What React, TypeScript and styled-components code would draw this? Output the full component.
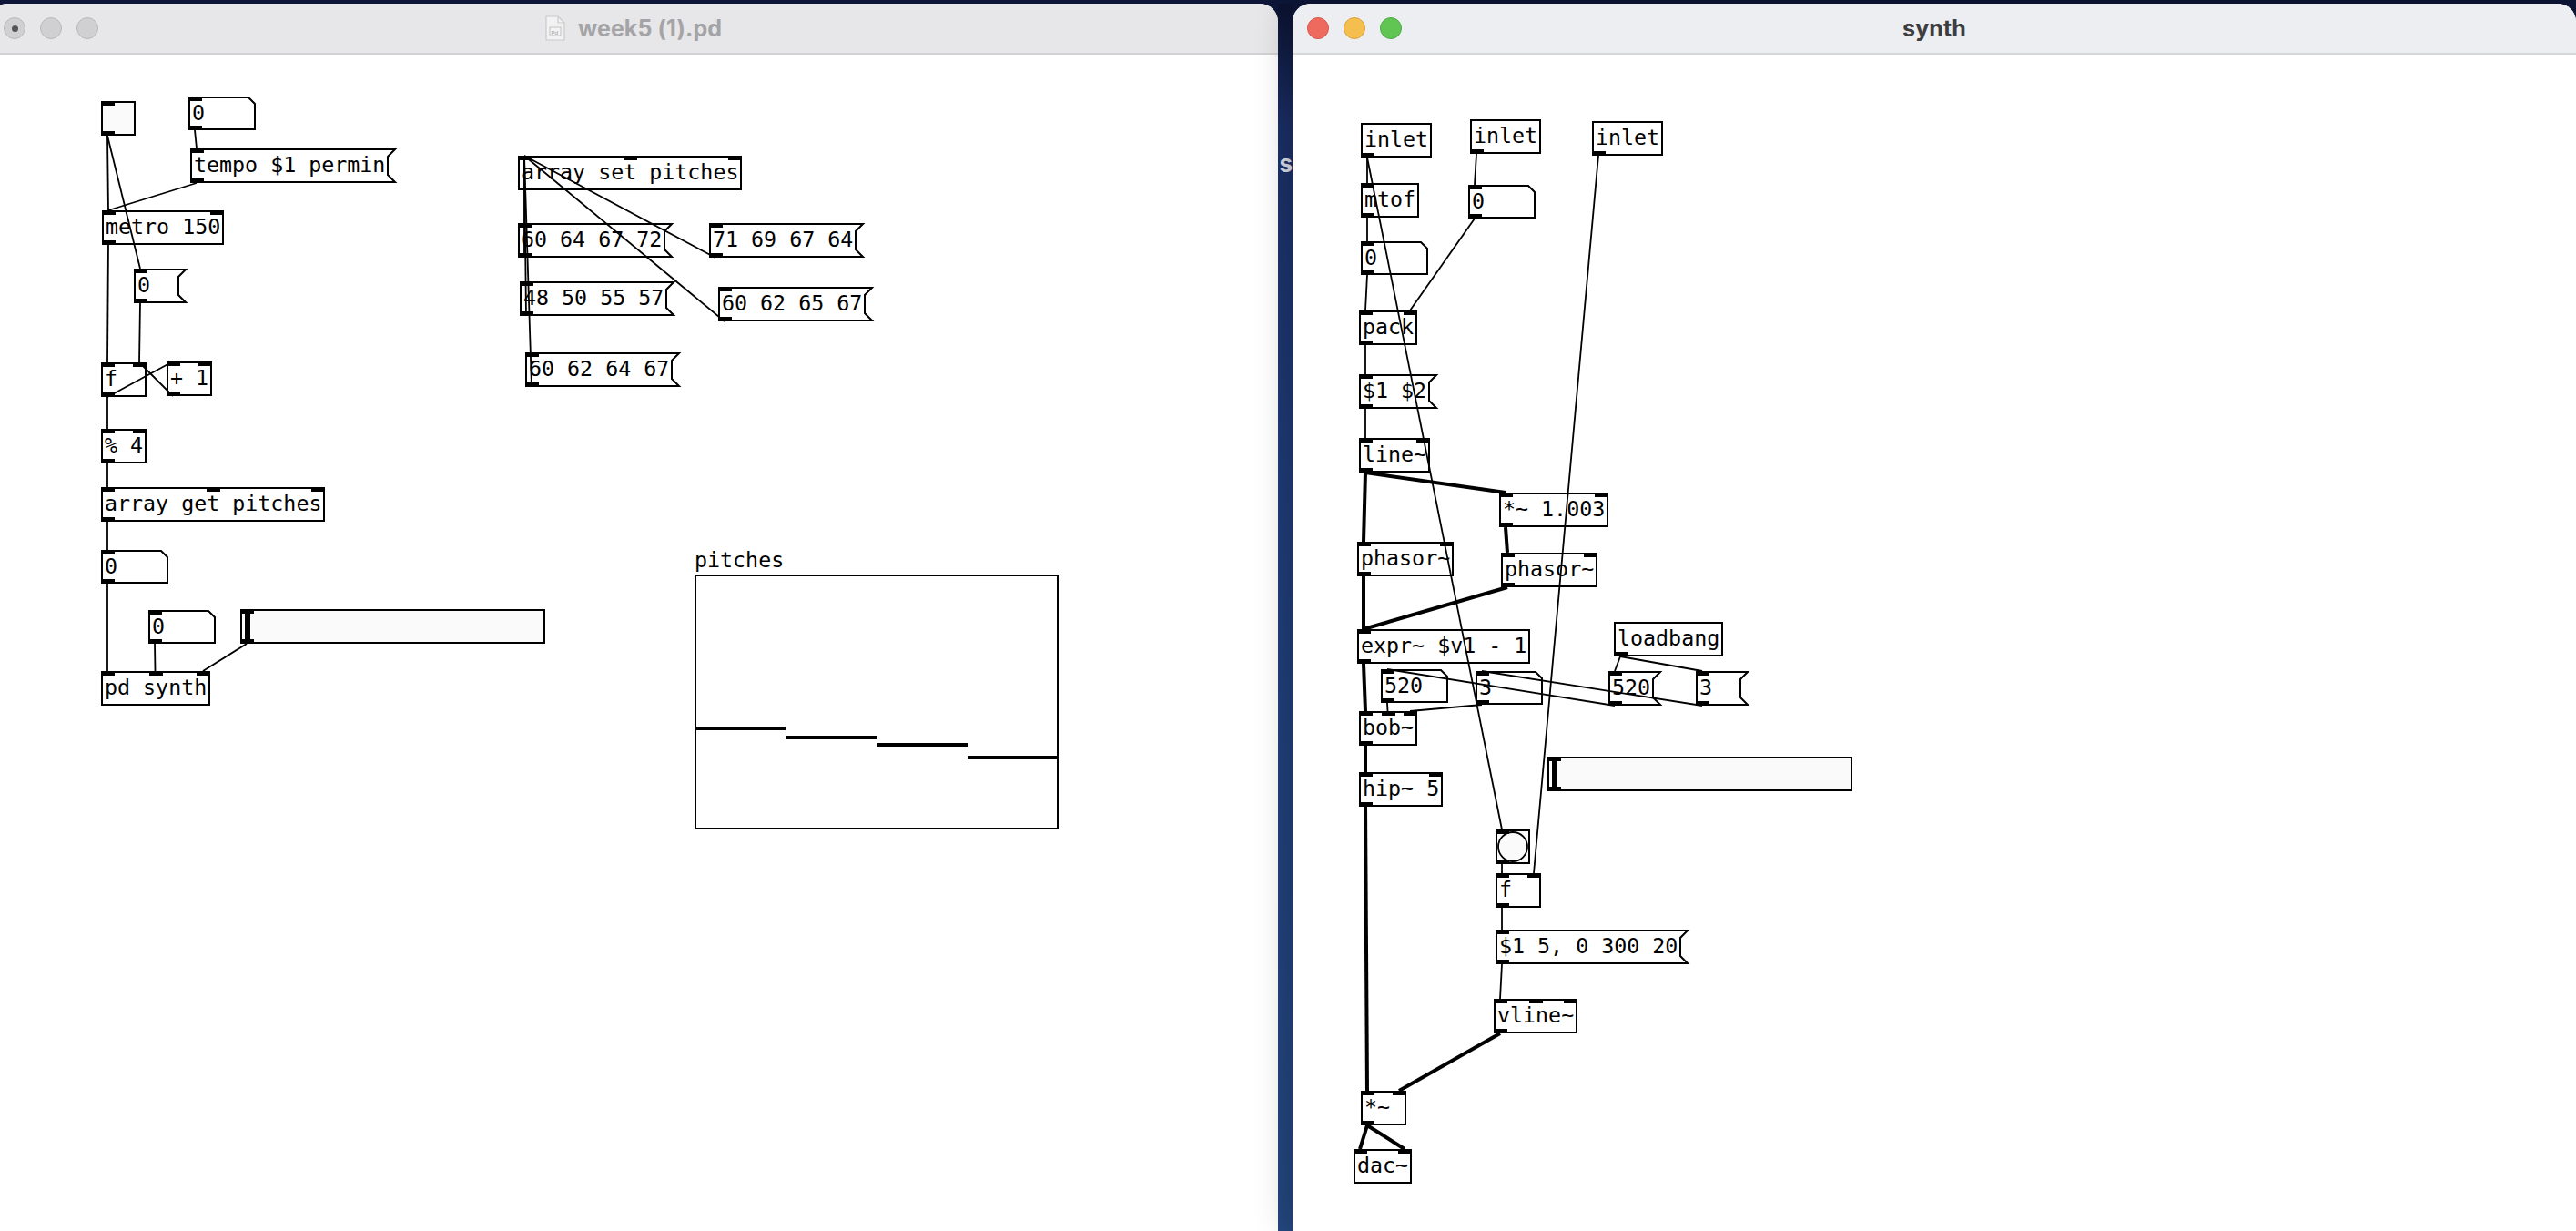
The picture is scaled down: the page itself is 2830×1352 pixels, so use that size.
import React from "react";
import styled, { createGlobalStyle } from "styled-components";

type Kind = "obj" | "msg" | "num" | "bang" | "slider";
interface PdNode {
  id: string;
  kind: Kind;
  x: number;
  y: number;
  text?: string;
  ins: number;
  outs: number;
  circle?: boolean;
}
type Wire = [string, number, string, number, boolean?];

const MONO = `"DejaVu Sans Mono", "Liberation Mono", monospace`;
const SANS = `"Inter", "Liberation Sans", "Noto Sans", sans-serif`;
const CHAR = 14;
const TAB = 15;

const GlobalStyle = createGlobalStyle`
  html, body { margin: 0; padding: 0; width: 2830px; height: 1352px; overflow: hidden; background: #14224a; }
  #root { width: 2830px; height: 1352px; }
  * { box-sizing: border-box; }
`;

/* ---------- desktop & windows ---------- */

const Desktop = styled.div`
  width: 2830px;
  height: 1352px;
  padding-top: 4px;
  display: flex;
  align-items: stretch;
  overflow: hidden;
  background: linear-gradient(180deg, #0d1638 0%, #1a326c 30%, #21447f 70%, #2a4c86 100%);
`;

const Window = styled.section<{ $w: number; $shift?: number; $active?: boolean }>`
  width: ${(p) => p.$w}px;
  flex: none;
  margin-left: ${(p) => p.$shift ?? 0}px;
  display: flex;
  flex-direction: column;
  background: #fff;
  border-radius: 20px 20px 0 0;
  overflow: hidden;
  position: relative;
  z-index: ${(p) => (p.$active ? 2 : 1)};
  box-shadow: ${(p) => (p.$active ? "0 0 40px rgba(0,0,0,0.28)" : "none")};
`;

const Gap = styled.div`
  width: 16px;
  flex: none;
  padding-top: 160px;
  color: #d9dde8;
  font: 700 26px ${SANS};
  text-align: right;
  overflow: hidden;
  background: linear-gradient(180deg, #0b1230 0%, #1b2f66 10%, #1f3c78 40%, #24477f 100%);
`;

const TitleBar = styled.header<{ $active?: boolean }>`
  height: 56px;
  flex: none;
  display: grid;
  grid-template-columns: 1fr auto 1fr;
  align-items: center;
  background: ${(p) => (p.$active ? "#eceef2" : "#e7e7e9")};
  border-bottom: 2px solid ${(p) => (p.$active ? "#d6d7da" : "#d2d2d4")};
`;

const Lights = styled.div`
  display: flex;
  gap: 16px;
  padding-left: 16px;
  justify-self: start;
`;

const Light = styled.span<{ $fill: string; $ring: string; $dot?: boolean }>`
  width: 24px;
  height: 24px;
  border-radius: 50%;
  background: ${(p) => p.$fill};
  border: 1px solid ${(p) => p.$ring};
  display: flex;
  align-items: center;
  justify-content: center;
  &::after {
    content: "";
    width: 7px;
    height: 7px;
    border-radius: 50%;
    background: ${(p) => (p.$dot ? "#555" : "transparent")};
  }
`;

const Title = styled.div<{ $active?: boolean }>`
  display: flex;
  align-items: center;
  gap: 14px;
  font: 700 25px ${SANS};
  color: ${(p) => (p.$active ? "#3d3d40" : "#a4a4a7")};
  letter-spacing: 0.1px;
`;

const Canvas = styled.div`
  flex: 1;
  position: relative;
  background: #fff;
`;

/* ---------- pd boxes ---------- */

const Frame = styled.div<{ $x: number; $y: number; $w: number; $h: number }>`
  position: absolute;
  left: ${(p) => p.$x}px;
  top: ${(p) => p.$y}px;
  width: ${(p) => p.$w}px;
  height: ${(p) => p.$h}px;
`;

const ObjectBox = styled(Frame)`
  box-shadow: inset 0 0 0 2px #000;
  background: transparent;
`;

const ShapedBox = styled(Frame)`
  background: transparent;
`;

const BangBox = styled(Frame)`
  box-shadow: inset 0 0 0 2px #000;
  background: #fafafa;
`;

const SliderBox = styled(Frame)`
  box-shadow: inset 0 0 0 2px #000;
  background: #fafafa;
`;

const Knob = styled.div`
  position: absolute;
  left: 4px;
  top: 2px;
  bottom: 2px;
  width: 7px;
  background: #000;
  border-left: 1px solid #fff;
`;

const Outline = styled.svg`
  position: absolute;
  left: 0;
  top: 0;
  width: 100%;
  height: 100%;
  overflow: visible;
`;

const BoxText = styled.span`
  position: relative;
  display: block;
  font-family: ${MONO};
  font-size: 23.3px;
  line-height: 36px;
  padding-left: 4px;
  white-space: pre;
  color: #000;
`;

const Tab = styled.div<{ $x: number; $edge: "top" | "bottom" }>`
  position: absolute;
  left: ${(p) => p.$x}px;
  ${(p) => (p.$edge === "top" ? "top: 0;" : "bottom: 0;")}
  width: ${TAB}px;
  height: 5px;
  background: #000;
`;

const WireLayer = styled.svg`
  position: absolute;
  left: 0;
  top: 0;
  width: 100%;
  height: 100%;
  overflow: visible;
  pointer-events: none;
  z-index: 3;
`;

/* ---------- array graph ---------- */

const GraphWrap = styled.div<{ $x: number; $y: number }>`
  position: absolute;
  left: ${(p) => p.$x}px;
  top: ${(p) => p.$y}px;
  display: flex;
  flex-direction: column;
`;

const GraphLabel = styled.span`
  font-family: ${MONO};
  font-size: 23.3px;
  line-height: 33px;
  color: #000;
`;

const GraphFrame = styled.div`
  width: 400px;
  height: 280px;
  box-shadow: inset 0 0 0 2px #000;
  position: relative;
`;

const Plot = styled.svg`
  display: block;
  width: 100%;
  height: 100%;
`;

/* ---------- helpers ---------- */

function sizeOf(n: PdNode) {
  const len = Math.max(3, (n.text ?? "").length);
  switch (n.kind) {
    case "obj":
      return { w: len * CHAR + 8, h: 38 };
    case "msg":
      return { w: len * CHAR + 16, h: 38 };
    case "num":
      return { w: 74, h: 37 };
    case "bang":
      return { w: 38, h: 38 };
    case "slider":
      return { w: 335, h: 38 };
  }
}

function portX(w: number, count: number, i: number) {
  if (count <= 1) return 0;
  return ((w - TAB) * i) / (count - 1);
}

const numPath = (w: number, h: number) => `M1,1 H${w - 8} L${w - 1},8 V${h - 1} H1 Z`;
const msgPath = (w: number, h: number) =>
  `M1,1 H${w - 1} L${w - 9},9 V${h - 9} L${w - 1},${h - 1} H1 Z`;

function Tabs({ n, w }: { n: PdNode; w: number }) {
  return (
    <>
      {Array.from({ length: n.ins }, (_, i) => (
        <Tab key={"i" + i} $x={portX(w, n.ins, i)} $edge="top" />
      ))}
      {Array.from({ length: n.outs }, (_, i) => (
        <Tab key={"o" + i} $x={portX(w, n.outs, i)} $edge="bottom" />
      ))}
    </>
  );
}

function PdBox({ n, ox, oy }: { n: PdNode; ox: number; oy: number }) {
  const { w, h } = sizeOf(n);
  const x = n.x - ox;
  const y = n.y - oy;
  switch (n.kind) {
    case "obj":
      return (
        <ObjectBox $x={x} $y={y} $w={w} $h={h}>
          <BoxText>{n.text}</BoxText>
          <Tabs n={n} w={w} />
        </ObjectBox>
      );
    case "msg":
    case "num":
      return (
        <ShapedBox $x={x} $y={y} $w={w} $h={h}>
          <Outline viewBox={`0 0 ${w} ${h}`}>
            <path
              d={n.kind === "msg" ? msgPath(w, h) : numPath(w, h)}
              fill="#fff"
              stroke="#000"
              strokeWidth={2}
            />
          </Outline>
          <BoxText>{n.text}</BoxText>
          <Tabs n={n} w={w} />
        </ShapedBox>
      );
    case "bang":
      return (
        <BangBox $x={x} $y={y} $w={w} $h={h}>
          {n.circle && (
            <Outline viewBox={`0 0 ${w} ${h}`}>
              <circle cx={w / 2} cy={h / 2} r={16} fill="#fafafa" stroke="#000" strokeWidth={1.8} />
            </Outline>
          )}
          <Tabs n={n} w={w} />
        </BangBox>
      );
    case "slider":
      return (
        <SliderBox $x={x} $y={y} $w={w} $h={h}>
          <Knob />
          <Tabs n={n} w={w} />
        </SliderBox>
      );
  }
}

function PdCanvas({
  nodes,
  wires,
  ox,
  oy,
  children,
}: {
  nodes: PdNode[];
  wires: Wire[];
  ox: number;
  oy: number;
  children?: React.ReactNode;
}) {
  const byId = new Map(nodes.map((n) => [n.id, n]));
  return (
    <Canvas>
      {nodes.map((n) => (
        <PdBox key={n.id} n={n} ox={ox} oy={oy} />
      ))}
      {children}
      <WireLayer>
        {wires.map(([a, o, b, i, sig], k) => {
          const A = byId.get(a)!;
          const B = byId.get(b)!;
          const sa = sizeOf(A);
          const sb = sizeOf(B);
          const x1 = A.x - ox + portX(sa.w, A.outs, o) + 7;
          const y1 = A.y - oy + sa.h;
          const x2 = B.x - ox + portX(sb.w, B.ins, i) + 7;
          const y2 = B.y - oy;
          return (
            <line
              key={k}
              x1={x1}
              y1={y1}
              x2={x2}
              y2={y2}
              stroke="#000"
              strokeWidth={sig ? 4 : 1.8}
            />
          );
        })}
      </WireLayer>
    </Canvas>
  );
}

/* ---------- patch data (page coordinates) ---------- */

const mainNodes: PdNode[] = [
  { id: "bang", kind: "bang", x: 111, y: 111, ins: 1, outs: 1 },
  { id: "numA", kind: "num", x: 207, y: 106, text: "0", ins: 1, outs: 1 },
  { id: "tempo", kind: "msg", x: 209, y: 163, text: "tempo $1 permin", ins: 1, outs: 1 },
  { id: "metro", kind: "obj", x: 112, y: 231, text: "metro 150", ins: 2, outs: 1 },
  { id: "zero", kind: "msg", x: 147, y: 295, text: "0", ins: 1, outs: 1 },
  { id: "f", kind: "obj", x: 111, y: 398, text: "f", ins: 2, outs: 1 },
  { id: "plus", kind: "obj", x: 183, y: 397, text: "+ 1", ins: 2, outs: 1 },
  { id: "mod", kind: "obj", x: 111, y: 471, text: "% 4", ins: 2, outs: 1 },
  { id: "aget", kind: "obj", x: 111, y: 535, text: "array get pitches", ins: 3, outs: 1 },
  { id: "numB", kind: "num", x: 111, y: 604, text: "0", ins: 1, outs: 1 },
  { id: "numC", kind: "num", x: 163, y: 670, text: "0", ins: 1, outs: 1 },
  { id: "slider", kind: "slider", x: 264, y: 669, ins: 1, outs: 1 },
  { id: "pdsynth", kind: "obj", x: 111, y: 737, text: "pd synth", ins: 3, outs: 0 },
  { id: "aset", kind: "obj", x: 569, y: 171, text: "array set pitches", ins: 3, outs: 0 },
  { id: "m1", kind: "msg", x: 569, y: 245, text: "60 64 67 72", ins: 1, outs: 1 },
  { id: "m2", kind: "msg", x: 571, y: 309, text: "48 50 55 57", ins: 1, outs: 1 },
  { id: "m3", kind: "msg", x: 577, y: 387, text: "60 62 64 67", ins: 1, outs: 1 },
  { id: "m4", kind: "msg", x: 779, y: 245, text: "71 69 67 64", ins: 1, outs: 1 },
  { id: "m5", kind: "msg", x: 789, y: 315, text: "60 62 65 67", ins: 1, outs: 1 },
];

const mainWires: Wire[] = [
  ["bang", 0, "metro", 0],
  ["bang", 0, "zero", 0],
  ["numA", 0, "tempo", 0],
  ["tempo", 0, "metro", 0],
  ["metro", 0, "f", 0],
  ["zero", 0, "f", 1],
  ["f", 0, "plus", 0],
  ["plus", 0, "f", 1],
  ["f", 0, "mod", 0],
  ["mod", 0, "aget", 0],
  ["aget", 0, "numB", 0],
  ["numB", 0, "pdsynth", 0],
  ["numC", 0, "pdsynth", 1],
  ["slider", 0, "pdsynth", 2],
  ["m1", 0, "aset", 0],
  ["m2", 0, "aset", 0],
  ["m3", 0, "aset", 0],
  ["m4", 0, "aset", 0],
  ["m5", 0, "aset", 0],
];

const synthNodes: PdNode[] = [
  { id: "inA", kind: "obj", x: 1495, y: 135, text: "inlet", ins: 0, outs: 1 },
  { id: "inB", kind: "obj", x: 1615, y: 131, text: "inlet", ins: 0, outs: 1 },
  { id: "inC", kind: "obj", x: 1749, y: 133, text: "inlet", ins: 0, outs: 1 },
  { id: "mtof", kind: "obj", x: 1495, y: 201, text: "mtof", ins: 1, outs: 1 },
  { id: "numR", kind: "num", x: 1613, y: 203, text: "0", ins: 1, outs: 1 },
  { id: "numL", kind: "num", x: 1495, y: 265, text: "0", ins: 1, outs: 1 },
  { id: "pack", kind: "obj", x: 1493, y: 341, text: "pack", ins: 2, outs: 1 },
  { id: "dol", kind: "msg", x: 1493, y: 411, text: "$1 $2", ins: 1, outs: 1 },
  { id: "line", kind: "obj", x: 1493, y: 481, text: "line~", ins: 2, outs: 1 },
  { id: "mul", kind: "obj", x: 1647, y: 541, text: "*~ 1.003", ins: 2, outs: 1 },
  { id: "phL", kind: "obj", x: 1491, y: 595, text: "phasor~", ins: 2, outs: 1 },
  { id: "phR", kind: "obj", x: 1649, y: 607, text: "phasor~", ins: 2, outs: 1 },
  { id: "expr", kind: "obj", x: 1491, y: 691, text: "expr~ $v1 - 1", ins: 1, outs: 1 },
  { id: "lb", kind: "obj", x: 1773, y: 683, text: "loadbang", ins: 0, outs: 1 },
  { id: "n520", kind: "num", x: 1517, y: 735, text: "520", ins: 1, outs: 1 },
  { id: "n3", kind: "num", x: 1621, y: 737, text: "3", ins: 1, outs: 1 },
  { id: "m520", kind: "msg", x: 1767, y: 737, text: "520", ins: 1, outs: 1 },
  { id: "m3", kind: "msg", x: 1863, y: 737, text: "3", ins: 1, outs: 1 },
  { id: "bob", kind: "obj", x: 1493, y: 781, text: "bob~", ins: 3, outs: 1 },
  { id: "sl", kind: "slider", x: 1700, y: 831, ins: 1, outs: 1 },
  { id: "hip", kind: "obj", x: 1493, y: 848, text: "hip~ 5", ins: 2, outs: 1 },
  { id: "bng", kind: "bang", x: 1643, y: 911, ins: 1, outs: 1, circle: true },
  { id: "fR", kind: "obj", x: 1643, y: 959, text: "f", ins: 2, outs: 1 },
  { id: "env", kind: "msg", x: 1643, y: 1021, text: "$1 5, 0 300 20", ins: 1, outs: 1 },
  { id: "vline", kind: "obj", x: 1641, y: 1097, text: "vline~", ins: 3, outs: 1 },
  { id: "mulS", kind: "obj", x: 1495, y: 1198, text: "*~", ins: 2, outs: 1 },
  { id: "dac", kind: "obj", x: 1487, y: 1262, text: "dac~", ins: 2, outs: 0 },
];

const synthWires: Wire[] = [
  ["inA", 0, "mtof", 0],
  ["inA", 0, "bng", 0],
  ["inB", 0, "numR", 0],
  ["inC", 0, "fR", 1],
  ["mtof", 0, "numL", 0],
  ["numL", 0, "pack", 0],
  ["numR", 0, "pack", 1],
  ["pack", 0, "dol", 0],
  ["dol", 0, "line", 0],
  ["line", 0, "phL", 0, true],
  ["line", 0, "mul", 0, true],
  ["mul", 0, "phR", 0, true],
  ["phL", 0, "expr", 0, true],
  ["phR", 0, "expr", 0, true],
  ["expr", 0, "bob", 0, true],
  ["lb", 0, "m520", 0],
  ["lb", 0, "m3", 0],
  ["m520", 0, "n520", 0],
  ["m3", 0, "n3", 0],
  ["n520", 0, "bob", 1],
  ["n3", 0, "bob", 2],
  ["bob", 0, "hip", 0, true],
  ["hip", 0, "mulS", 0, true],
  ["bng", 0, "fR", 0],
  ["fR", 0, "env", 0],
  ["env", 0, "vline", 0],
  ["vline", 0, "mulS", 1, true],
  ["mulS", 0, "dac", 0, true],
  ["mulS", 0, "dac", 1, true],
];

const pitches = [169, 179, 187, 201];

function DocIcon() {
  return (
    <svg width="22" height="28" viewBox="0 0 22 28">
      <path d="M1,1 H14 L21,8 V27 H1 Z" fill="#f2f2f3" stroke="#cacacc" strokeWidth="1.2" />
      <path d="M14,1 V8 H21" fill="none" stroke="#cacacc" strokeWidth="1.2" />
      <rect x="5" y="13" width="12" height="9" fill="none" stroke="#c2c2c4" strokeWidth="1" />
      <text x="6.5" y="20.5" fontSize="6" fontFamily="Liberation Sans, sans-serif" fill="#b4b4b6">
        Pd
      </text>
    </svg>
  );
}

export default function App() {
  const leftX = -12;
  const rightX = 1420;
  const top = 60;
  return (
    <>
      <GlobalStyle />
      <Desktop>
        <Window $w={1416} $shift={leftX}>
          <TitleBar>
            <Lights>
              <Light $fill="#d0d0d2" $ring="#b9b9bb" $dot />
              <Light $fill="#d0d0d2" $ring="#b9b9bb" />
              <Light $fill="#d0d0d2" $ring="#b9b9bb" />
            </Lights>
            <Title>
              <DocIcon />
              week5 (1).pd
            </Title>
            <span />
          </TitleBar>
          <PdCanvas nodes={mainNodes} wires={mainWires} ox={leftX} oy={top}>
            <GraphWrap $x={763 - leftX} $y={598 - top}>
              <GraphLabel>pitches</GraphLabel>
              <GraphFrame>
                <Plot viewBox="0 0 400 280">
                  {pitches.map((py, i) => (
                    <line key={i} x1={i * 100} x2={i * 100 + 100} y1={py} y2={py} stroke="#000" strokeWidth={4} />
                  ))}
                </Plot>
              </GraphFrame>
            </GraphWrap>
          </PdCanvas>
        </Window>
        <Gap>s</Gap>
        <Window $w={1410} $active>
          <TitleBar $active>
            <Lights>
              <Light $fill="#ee6a5f" $ring="#d5564c" />
              <Light $fill="#f5bf4f" $ring="#d9a23a" />
              <Light $fill="#61c554" $ring="#4ea943" />
            </Lights>
            <Title $active>synth</Title>
            <span />
          </TitleBar>
          <PdCanvas nodes={synthNodes} wires={synthWires} ox={rightX} oy={top} />
        </Window>
      </Desktop>
    </>
  );
}
